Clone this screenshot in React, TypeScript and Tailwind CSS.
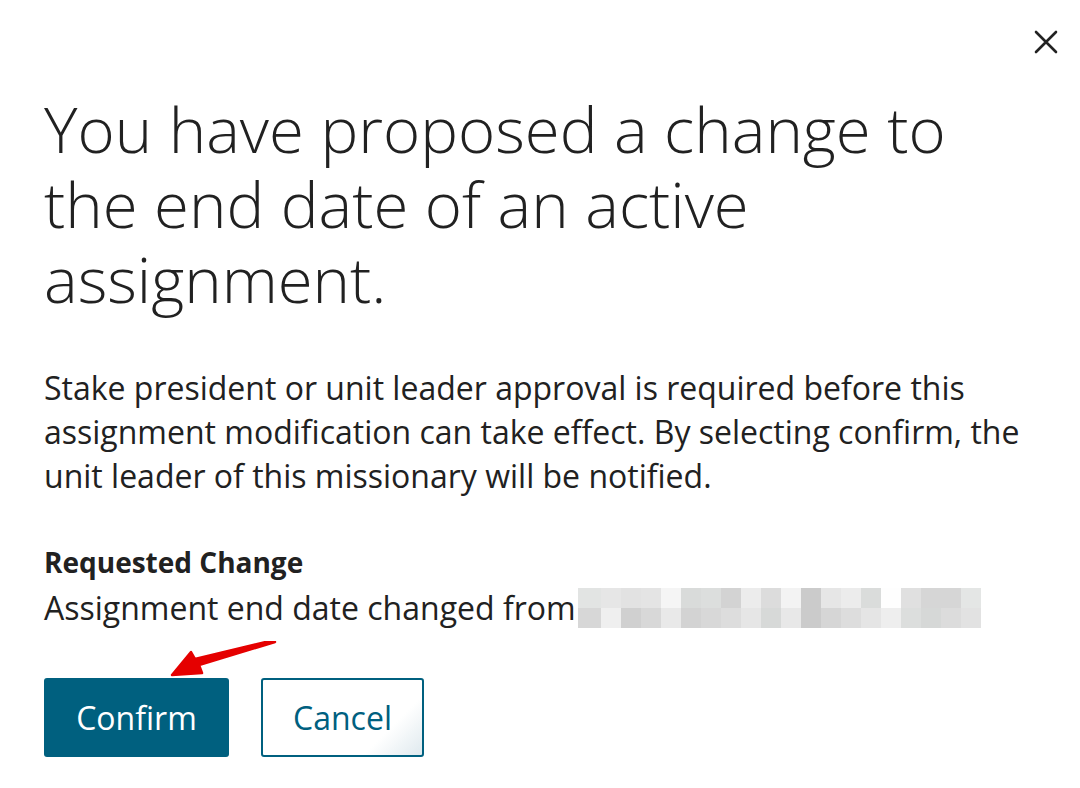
import React from "react";

const pixRow1 = ["#e2e4e3","#e6e6e6","#e2e2e2","#e4e4e4","#f5f5f5","#d9dbda","#dcdedd","#d3d3d3","#ececec","#dcdcdc","#f3f3f3","#cbcbcb","#e6e6e6","#ececec","#dadcdb","#fefefe","#e0e0e0","#d6d6d6","#d6d6d6","#e4e6e5"];
const pixRow2 = ["#d7d7d7","#efefef","#d0d0d0","#d8d8d8","#e9e9e9","#d3d3d3","#d8d8d8","#dddddd","#e6e6e6","#d7d9d8","#e8e8e8","#cbcbcb","#d6d6d6","#dddddd","#e5e5e5","#eeeeee","#dcdedd","#d6d8d7","#dcdcdc","#e2e2e2"];

function Pixelated() {
  return (
    <span className="inline-flex flex-col ml-[2px] mt-[2px]">
      {[pixRow1, pixRow2].map((row, r) => (
        <span key={r} className="flex">
          {row.map((c, i) => (
            <span
              key={i}
              className={i === 0 ? "h-[20px] w-[23px]" : "h-[20px] w-[20px]"}
              style={{ backgroundColor: c }}
            />
          ))}
        </span>
      ))}
    </span>
  );
}

export default function App() {
  return (
    <div
      className="relative w-[1080px] h-[788px] bg-white text-[#212121] overflow-hidden"
      style={{ fontFamily: '"Open Sans", "Noto Sans", sans-serif' }}
    >
      <button className="absolute right-[22px] top-[30px] w-[24px] h-[24px] flex items-center justify-center">
        <svg width="24" height="24" viewBox="0 0 24 24" fill="none" stroke="#222" strokeWidth="2.6" strokeLinecap="round">
          <path d="M2 2 L22 22 M22 2 L2 22" />
        </svg>
      </button>

      <div className="pl-[44px] pt-[91px]">
        <h1 className="max-w-[960px] text-[63.5px] leading-[75px] font-light text-[#212121]">
          You have proposed a change to the end date of an active assignment.
        </h1>

        <p className="mt-[50px] max-w-[1000px] text-[32px] leading-[44px]">
          Stake president or unit leader approval is required before this assignment modification can take effect. By selecting confirm, the unit leader of this missionary will be notified.
        </p>

        <div className="mt-[40px]">
          <div className="text-[28px] leading-[48px] font-bold">Requested Change</div>
          <div className="flex items-start text-[32px] leading-[44px]">
            <span>Assignment end date changed from</span>
            <Pixelated />
          </div>
        </div>

        <div className="relative mt-[48px] flex gap-[32px]">
          <button className="w-[185px] h-[79px] rounded-[3px] bg-[#00607f] text-white text-[32px]">
            Confirm
          </button>
          <button className="w-[163px] h-[79px] rounded-[3px] border-2 border-[#00607f] text-[#00607f] text-[32px] bg-[linear-gradient(135deg,#ffffff_75%,#dfe9ee_100%)]">
            Cancel
          </button>
          <svg className="absolute left-[124px] top-[-37px]" width="110" height="45" viewBox="0 0 110 45">
            <path d="M107 1 L31 24 L34 32 L4 34 L23 11 L27 18 L106 -1 Z" fill="#e50000" stroke="#e50000" strokeWidth="2.5" strokeLinejoin="round" />
          </svg>
        </div>
      </div>
    </div>
  );
}
